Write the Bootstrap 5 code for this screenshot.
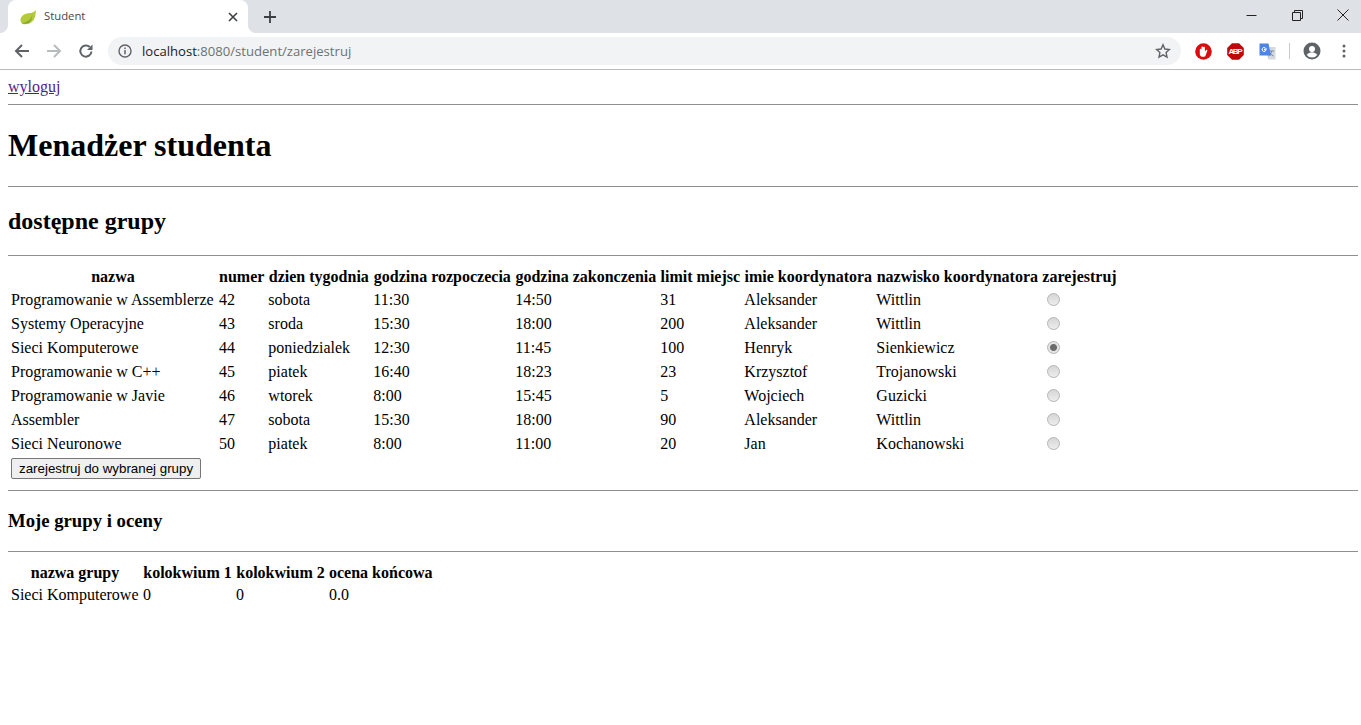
<!DOCTYPE html>
<html lang="pl">
<head>
<meta charset="UTF-8">
<title>Student</title>
<link rel="stylesheet" href="https://cdn.jsdelivr.net/npm/bootstrap@5.3.0/dist/css/bootstrap.min.css">
<style>
html, body {
	background: #fff;
}

body {
	margin: 0;
	font-family: "Liberation Serif", serif;
	font-size: 16px;
	line-height: normal;
	color: #000;
}

/* pasek przegladarki */
.tabstrip {
	height: 33px;
	background: #dee1e6;
	font-family: "Open Sans", "Noto Sans", sans-serif;
}

.tabitem {
	position: relative;
	width: 240px;
	height: 33px;
	margin-left: 8px;
	padding: 0 10px 0 12px;
	background: #fff;
	border-radius: 8px 8px 0 0;
	font-size: 11.3px;
	color: #45494d;
}

.tabitem::before, .tabitem::after {
	content: "";
	position: absolute;
	bottom: 0;
	width: 8px;
	height: 8px;
}

.tabitem::before {
	left: -8px;
	background: radial-gradient(circle at 0 0, #dee1e6 7.5px, #fff 8.5px);
}

.tabitem::after {
	right: -8px;
	background: radial-gradient(circle at 100% 0, #dee1e6 7.5px, #fff 8.5px);
}

.tabtitle {
	margin-left: 8px;
	padding-bottom: 2px;
}

.newtab {
	width: 28px;
	margin-left: 8px;
}

.winbtn {
	width: 46px;
	height: 30px;
}

.winbtn:last-child {
	width: 41px;
	padding-left: 5px;
}

.toolbar {
	height: 36px;
	box-sizing: content-box;
	border-bottom: 1px solid #b9babb;
	font-family: "Open Sans", "Noto Sans", sans-serif;
}

.navicon {
	width: 32px;
}

.navicon:first-child {
	margin-left: 6px;
}

.urlbar {
	width: 1073px;
	height: 28px;
	margin-left: 6px;
	padding: 0 10px;
	background: #f1f3f4;
	border-radius: 14px;
	font-size: 13.1px;
	color: #6d7175;
}

.urlhost {
	color: #202124;
}

.urltext {
	margin-left: 10px;
	padding-bottom: 1px;
}

.exticon {
	width: 32px;
}

.urlbar + .exticon {
	margin-left: 6px;
}

.sepline {
	width: 1px;
	height: 16px;
	background: #c8cacc;
	margin: 0 6px;
}

/* tresc strony */
.pagebody {
	padding: 8px 3px 8px 8px;
}

.pagebody a {
	color: #551a8b;
	text-decoration: underline;
}

.pagebody hr {
	margin: 8px 0;
	border: 0;
	border-top: 1px solid #8f8f8f;
	opacity: 1;
}

.pagebody h1, .pagebody h2, .pagebody h3 {
	font-family: inherit;
	font-weight: 700;
}

.pagebody h1 {
	font-size: 32px;
	line-height: 38px;
	margin: 21.44px 0;
}

.pagebody h2 {
	font-size: 24px;
	line-height: 28px;
	margin: 19.92px 0;
}

.pagebody h3 {
	font-size: 18.72px;
	line-height: 23px;
	margin: 18.72px 0;
}

.gridtable {
	border-collapse: separate;
	border-spacing: 2px;
}

.gridtable th, .gridtable td {
	padding: 1px;
	vertical-align: middle;
	white-space: nowrap;
}

.gridtable th {
	text-align: center;
	font-weight: 700;
	line-height: 19px;
}

.gridwide th:nth-child(1) { width: 206px; }
.gridwide th:nth-child(2) { width: 47px; }
.gridwide th:nth-child(3) { width: 103px; }
.gridwide th:nth-child(4) { width: 140px; }
.gridwide th:nth-child(5) { width: 143px; }
.gridwide th:nth-child(6) { width: 82px; }
.gridwide th:nth-child(7) { width: 130px; }
.gridwide th:nth-child(8) { width: 164px; }

.gridmarks th:nth-child(1) { width: 130px; }
.gridmarks th:nth-child(2) { width: 91px; }
.gridmarks th:nth-child(3) { width: 91px; }

.pick {
	appearance: none;
	display: inline-block;
	width: 13px;
	height: 13px;
	margin: 3px 3px 0 5px;
	border: 1px solid #b5b5b5;
	border-radius: 50%;
	background: linear-gradient(#d6d6d6, #ececec);
	vertical-align: baseline;
}

.pick:checked {
	background: radial-gradient(circle, #6b6b6b 0, #6b6b6b 3px, #e4e4e4 4px);
}

.sendbtn {
	display: block;
	height: 21px;
	padding: 1px 7px;
	border: 1px solid #767676;
	border-radius: 2px;
	background: #efefef;
	color: #000;
	font-family: "Liberation Sans", sans-serif;
	font-size: 13.333px;
}
</style>
</head>
<body>
	<div class="tabstrip d-flex">
		<div class="tabitem d-flex align-items-center">
			<svg width="16" height="16" viewBox="0 0 16 16"><path d="M15.800 1C14 3.200 12.500 3.800 8.500 4.300 3.500 4.800.2 8 .5 11.500c.1 1.200.6 2.200 1.400 2.900 1.500 1 4.300 1.200 6.800.4C13.300 13.300 16 8.500 15.800 1z" fill="#b4c93b"/><path d="M2 14.200c2-.5 4.500-1 6.500-2.500 2.500-1.800 3.500-4 3.700-6.200.3 3.500-1 6.500-3.700 8.500-2.300.9-5 .9-6.500.2z" fill="#7da42e"/></svg>
			<span class="tabtitle flex-grow-1">Student</span>
			<svg width="10" height="10" viewBox="0 0 10 10"><path d="M1 1l8 8M9 1l-8 8" stroke="#3c4043" stroke-width="1.600"/></svg>
		</div>
		<div class="newtab d-flex align-items-center justify-content-center">
			<svg width="14" height="14" viewBox="0 0 14 14"><path d="M7 1v12M1 7h12" stroke="#3c4043" stroke-width="1.800"/></svg>
		</div>
		<div class="flex-grow-1"></div>
		<div class="winbtn d-flex align-items-center justify-content-center">
			<svg width="11" height="11" viewBox="0 0 11 11"><path d="M.5 5.500h10" stroke="#222" stroke-width="1"/></svg>
		</div>
		<div class="winbtn d-flex align-items-center justify-content-center">
			<svg width="11" height="11" viewBox="0 0 11 11" fill="none" stroke="#222"><path d="M.5 2.500h8v8h-8zM2.500 2.500v-2h8v8h-2"/></svg>
		</div>
		<div class="winbtn d-flex align-items-center justify-content-center">
			<svg width="12" height="12" viewBox="0 0 12 12"><path d="M.5.500l11 11M11.500.500l-11 11" stroke="#222" stroke-width="1"/></svg>
		</div>
	</div>
	<div class="toolbar d-flex align-items-center">
		<div class="navicon d-flex justify-content-center">
			<svg width="16" height="16" viewBox="0 0 16 16" fill="none" stroke="#5f6368" stroke-width="2"><path d="M15 8H2M8 2L2 8l6 6"/></svg>
		</div>
		<div class="navicon d-flex justify-content-center">
			<svg width="16" height="16" viewBox="0 0 16 16" fill="none" stroke="#b9bcbf" stroke-width="2"><path d="M1 8h13M8 2l6 6-6 6"/></svg>
		</div>
		<div class="navicon d-flex justify-content-center">
			<svg width="16" height="16" viewBox="0 0 16 16" fill="none"><path d="M13.500 8.500A5.600 5.600 0 1 1 11.800 4" stroke="#5f6368" stroke-width="2"/><path d="M14.500 1.500v5.500H9z" fill="#5f6368"/></svg>
		</div>
		<div class="urlbar d-flex align-items-center">
			<svg width="14" height="14" viewBox="0 0 14 14" fill="none"><circle cx="7" cy="7" r="6" stroke="#5f6368" stroke-width="1.400"/><path d="M7 6v4.200M7 3.400v1.500" stroke="#5f6368" stroke-width="1.500"/></svg>
			<span class="urltext flex-grow-1"><span class="urlhost">localhost</span>:8080/student/zarejestruj</span>
			<svg width="16" height="16" viewBox="0 0 16 16" fill="none"><path d="M8 1.800l1.900 4.200 4.500.5-3.300 3.100.9 4.500L8 11.800l-4 2.300.9-4.500L1.600 6.500l4.500-.5z" stroke="#5f6368" stroke-width="1.400"/></svg>
		</div>
		<div class="exticon d-flex justify-content-center">
			<svg width="17" height="17" viewBox="0 0 17 17"><circle cx="8.500" cy="8.500" r="8.300" fill="#d90d0d"/><path d="M4.800 9.500V6.500a.85.85 0 0 1 1.700 0V8V4.300a.85.85 0 0 1 1.700 0V8V4.600a.85.85 0 0 1 1.700 0V8.500l1.200-1.400c.8-.6 1.600.1 1.100.9L10.500 12.800c-.5.700-1 1-2 1H7.300c-1.700 0-2.500-1.500-2.500-3z" fill="#fff"/></svg>
		</div>
		<div class="exticon d-flex justify-content-center">
			<svg width="17" height="17" viewBox="0 0 17 17"><path d="M5 .2h7L16.800 5v7L12 16.800H5L.2 12V5z" fill="#c1060c"/><text x="8.500" y="11.300" font-size="8" font-weight="700" font-family="Liberation Sans, sans-serif" fill="#fff" text-anchor="middle" textLength="14">ABP</text></svg>
		</div>
		<div class="exticon d-flex justify-content-center">
			<svg width="17" height="17" viewBox="0 0 17 17"><path d="M7 4h9.500v12.500H9z" fill="#d5d8dc"/><path d="M.5.500h9L12 12.500H.5z" fill="#4a85e8"/><path d="M8 6h-2.500v1h1.500a2 2 0 1 1-.6-2" stroke="#fff" fill="none"/><path d="M10 8h5M12.500 8c0 2-1 4-3 5M11 10c.8 1.400 2 2.500 3.500 3" stroke="#7a8794" fill="none"/></svg>
		</div>
		<div class="sepline"></div>
		<div class="exticon d-flex justify-content-center">
			<svg width="18" height="18" viewBox="0 0 18 18"><circle cx="9" cy="9" r="8.500" fill="#5f6368"/><circle cx="9" cy="7" r="3" fill="#fff"/><path d="M3.800 13c1-2 3.300-2.800 5.200-2.800s4.200.8 5.200 2.800A6.800 6.800 0 0 1 9 15.600 6.800 6.800 0 0 1 3.800 13z" fill="#fff"/></svg>
		</div>
		<div class="exticon d-flex justify-content-center">
			<svg width="4" height="14" viewBox="0 0 4 14" fill="#5f6368"><circle cx="2" cy="2" r="1.500"/><circle cx="2" cy="7" r="1.500"/><circle cx="2" cy="12" r="1.500"/></svg>
		</div>
	</div>

	<div class="pagebody">
		<a href="#">wyloguj</a>
		<hr>
		<h1>Menadżer studenta</h1>
		<hr>
		<h2>dostępne grupy</h2>
		<hr>
		<form>
			<table class="gridtable gridwide">
				<thead>
					<tr>
						<th>nazwa</th><th>numer</th><th>dzien tygodnia</th><th>godzina rozpoczecia</th><th>godzina zakonczenia</th><th>limit miejsc</th><th>imie koordynatora</th><th>nazwisko koordynatora</th><th>zarejestruj</th>
					</tr>
				</thead>
				<tbody id="grupy"></tbody>
				<tfoot>
					<tr><td colspan="9"><button type="button" class="sendbtn">zarejestruj do wybranej grupy</button></td></tr>
				</tfoot>
			</table>
		</form>
		<hr>
		<h3>Moje grupy i oceny</h3>
		<hr>
		<table class="gridtable gridmarks">
			<thead>
				<tr><th>nazwa grupy</th><th>kolokwium 1</th><th>kolokwium 2</th><th>ocena końcowa</th></tr>
			</thead>
			<tbody>
				<tr><td>Sieci Komputerowe</td><td>0</td><td>0</td><td>0.0</td></tr>
			</tbody>
		</table>
	</div>

	<script>
		const grupy = [
			['Programowanie w Assemblerze', 42, 'sobota', '11:30', '14:50', 31, 'Aleksander', 'Wittlin'],
			['Systemy Operacyjne', 43, 'sroda', '15:30', '18:00', 200, 'Aleksander', 'Wittlin'],
			['Sieci Komputerowe', 44, 'poniedzialek', '12:30', '11:45', 100, 'Henryk', 'Sienkiewicz'],
			['Programowanie w C++', 45, 'piatek', '16:40', '18:23', 23, 'Krzysztof', 'Trojanowski'],
			['Programowanie w Javie', 46, 'wtorek', '8:00', '15:45', 5, 'Wojciech', 'Guzicki'],
			['Assembler', 47, 'sobota', '15:30', '18:00', 90, 'Aleksander', 'Wittlin'],
			['Sieci Neuronowe', 50, 'piatek', '8:00', '11:00', 20, 'Jan', 'Kochanowski']
		];
		const body = document.getElementById('grupy');
		grupy.forEach((g, i) => {
			const tr = document.createElement('tr');
			g.forEach(v => {
				const td = document.createElement('td');
				td.textContent = v;
				tr.appendChild(td);
			});
			const td = document.createElement('td');
			td.innerHTML = '<input class="pick" type="radio" name="grupa" disabled' + (i === 2 ? ' checked' : '') + '>';
			tr.appendChild(td);
			body.appendChild(tr);
		});
	</script>
	<script src="https://cdn.jsdelivr.net/npm/bootstrap@5.3.0/dist/js/bootstrap.bundle.min.js"></script>
</body>
</html>
